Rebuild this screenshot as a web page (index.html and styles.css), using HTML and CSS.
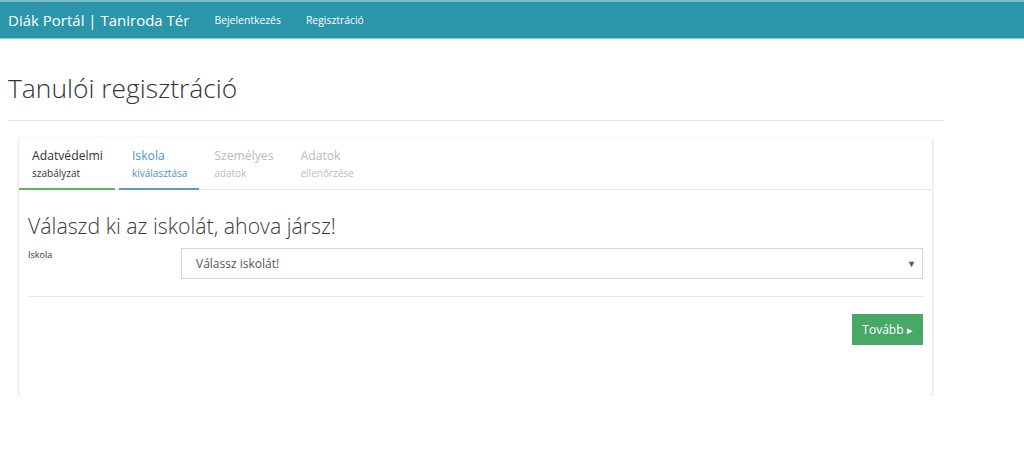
FILE: index.html
```html
<!DOCTYPE html>
<html lang="hu">
<head>
    <meta charset="UTF-8">
    <meta name="viewport" content="width=device-width, initial-scale=1.0">
    <title>Tanulói regisztráció</title>
    <link rel="stylesheet" href="styles.css">
</head>
<body>

<nav class="navbar">
    <a class="brand" href="#">Diák Portál | Taniroda Tér</a>
    <a class="nav-link" href="#">Bejelentkezés</a>
    <a class="nav-link" href="#">Regisztráció</a>
</nav>

<div class="container">
    <h1 class="page-title">Tanulói regisztráció</h1>
    <hr class="title-rule">

    <div class="card">
        <ul class="steps">
            <li class="step done">
                <span class="step-main">Adatvédelmi</span>
                <span class="step-sub">szabályzat</span>
            </li>
            <li class="step current">
                <span class="step-main">Iskola</span>
                <span class="step-sub">kiválasztása</span>
            </li>
            <li class="step">
                <span class="step-main">Személyes</span>
                <span class="step-sub">adatok</span>
            </li>
            <li class="step">
                <span class="step-main">Adatok</span>
                <span class="step-sub">ellenőrzése</span>
            </li>
        </ul>

        <div class="card-body">
            <h2 class="step-title">Válaszd ki az iskolát, ahova jársz!</h2>
            <div class="form-row">
                <label class="form-label" for="school">Iskola</label>
                <div class="select-wrap">
                    <select id="school" class="form-select">
                        <option>Válassz iskolát!</option>
                    </select>
                    <span class="select-arrow">&#9660;</span>
                </div>
            </div>
            <hr class="form-rule">
            <div class="actions">
                <button class="btn-next">Tovább <span class="caret">&#9656;</span></button>
            </div>
        </div>
    </div>
</div>

</body>
</html>
```

FILE: styles.css
```css
body {
    margin: 0;
    font-family: "Open Sans", "Noto Sans", sans-serif;
    color: #333;
    background-color: #fff;
}
.navbar {
    display: flex;
    align-items: center;
    height: 36px;
    background-color: #2b95aa;
    border-top: 2px solid #7dbccb;
    border-bottom: 1px solid #8ec7d3;
}
.navbar a {
    color: #fff;
    text-decoration: none;
}
.brand {
    font-size: 15px;
    padding-left: 8px;
    margin-right: 25px;
}
.nav-link {
    font-size: 10.4px;
    margin-right: 25px;
}
.container {
    padding: 0 80px 0 8px;
}
.page-title {
    font-size: 26.4px;
    font-weight: 300;
    line-height: 38px;
    margin: 30px 0 0;
    color: #333;
}
.title-rule {
    border: none;
    border-top: 1px solid #e3e3e3;
    margin: 13px 0 17px;
}
.card {
    margin: 0 12px 0 11px;
    border-radius: 3px;
    box-shadow: 0 1px 3px rgba(0, 0, 0, 0.25);
    background-color: #fff;
}
.steps {
    display: flex;
    list-style: none;
    margin: 0;
    padding: 0;
    border-bottom: 1px solid #e6e6e6;
}
.step {
    display: flex;
    flex-direction: column;
    padding: 9px 12px 7px 13px;
    margin-right: 2px;
    color: #bbb;
    border-bottom: 2px solid transparent;
    margin-bottom: -1px;
}
.step:first-child {
    margin-right: 4px;
}
.step-main {
    font-size: 12.2px;
    line-height: 18px;
}
.step-sub {
    font-size: 10px;
    line-height: 16px;
}
.step.done {
    color: #333;
    border-bottom-color: #5cb85c;
}
.step.current {
    color: #4a8fdc;
    border-bottom-color: #5b93e3;
}
.card-body {
    padding: 23px 9px 50px;
}
.step-title {
    font-size: 21.3px;
    font-weight: 300;
    line-height: 26px;
    margin: 0 0 9px;
    color: #3a3a3a;
}
.form-row {
    display: grid;
    grid-template-columns: 153px 1fr;
}
.form-label {
    font-size: 9px;
    line-height: 14px;
    color: #333;
}
.select-wrap {
    position: relative;
}
.form-select {
    width: 100%;
    height: 31px;
    padding: 0 14px;
    font-family: inherit;
    font-size: 12px;
    color: #555;
    background-color: #fff;
    border: 1px solid #d5d5d5;
    border-radius: 0;
    -webkit-appearance: none;
    appearance: none;
}
.select-arrow {
    position: absolute;
    right: 7px;
    top: 9px;
    font-size: 9px;
    color: #555;
    pointer-events: none;
}
.form-rule {
    border: none;
    border-top: 1px solid #e6e6e6;
    margin: 17px 0 17px;
}
.actions {
    display: flex;
    justify-content: flex-end;
}
.btn-next {
    height: 31px;
    width: 71px;
    font-family: inherit;
    font-size: 12px;
    color: #fff;
    background-color: #48a868;
    border: none;
    border-radius: 0;
    cursor: pointer;
}
.caret {
    font-size: 11px;
}
```
